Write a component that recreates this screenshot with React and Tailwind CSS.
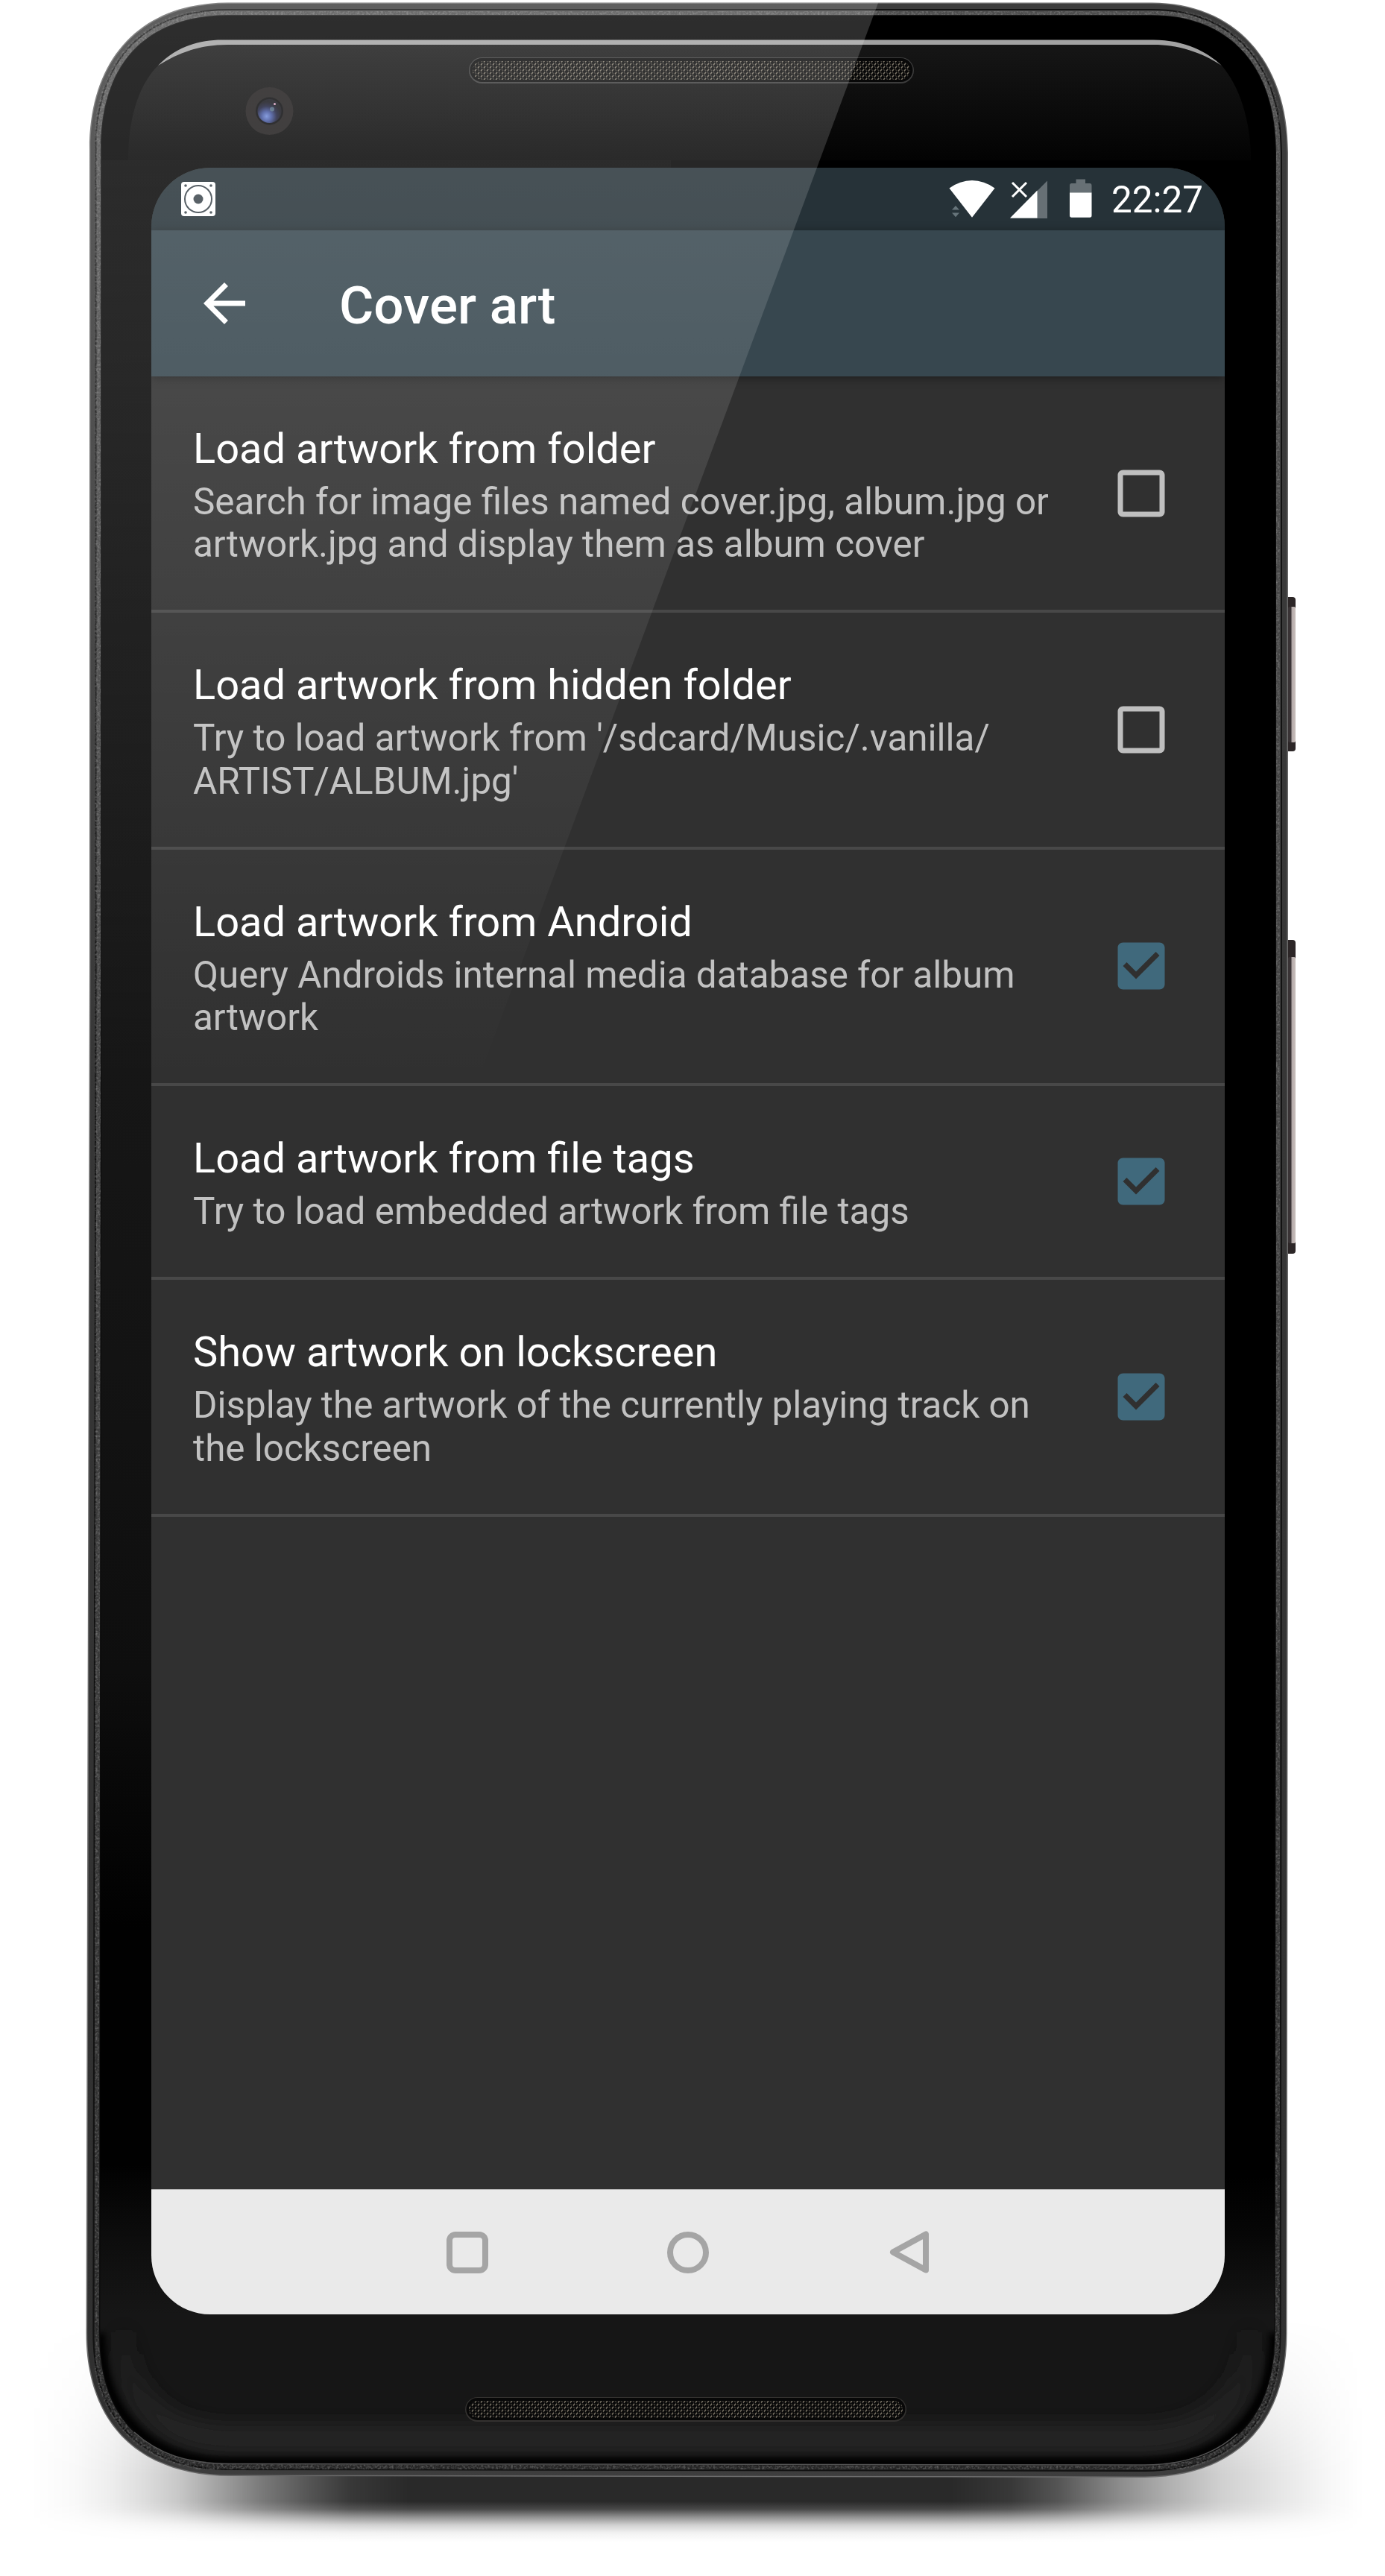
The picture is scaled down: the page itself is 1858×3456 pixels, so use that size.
import React from "react";

const ROWS = [
  {
    title: "Load artwork from folder",
    lines: ["Search for image files named cover.jpg, album.jpg or", "artwork.jpg and display them as album cover"],
    checked: false,
  },
  {
    title: "Load artwork from hidden folder",
    lines: ["Try to load artwork from '/sdcard/Music/.vanilla/", "ARTIST/ALBUM.jpg'"],
    checked: false,
  },
  {
    title: "Load artwork from Android",
    lines: ["Query Androids internal media database for album", "artwork"],
    checked: true,
  },
  {
    title: "Load artwork from file tags",
    lines: ["Try to load embedded artwork from file tags"],
    checked: true,
  },
  {
    title: "Show artwork on lockscreen",
    lines: ["Display the artwork of the currently playing track on", "the lockscreen"],
    checked: true,
  },
];

// Outline of the phone, moved inwards by i pixels.
function outline(i) {
  const t = 3.5 + i * 1.05;
  const b = 3323 - i;
  const r = 1728 - i;
  const l = 120 + i * 0.95;
  const lb = 115.5 + i * 1.1;
  const rb = 1726.5 - i;
  return `M${l} 200 C${l} ${77 + i * 0.45} ${190 + i * 0.4} ${t} 306 ${t} H1545 C${1655 - i * 0.4} ${t} ${r} ${80 + i * 0.45} ${r} 205 V1900 L${rb} 3130 C${rb} ${3250 - i * 0.45} ${1660 - i * 0.4} ${b} 1535 ${b + 1} L310 ${b - 1} C${185 + i * 0.4} ${b - 1} ${lb} ${3250 - i * 0.45} ${lb} 3130 L${l} 1300 Z`;
}

function Speaker({ x, y, w, h, ring }) {
  return (
    <g>
      <rect x={x} y={y} width={w} height={h} rx={h / 2} fill={ring} />
      <rect x={x + 1.5} y={y + 1} width={w - 3} height={h - 3} rx={h / 2 - 1.5} fill="#080808" />
      <rect x={x + 5} y={y + 5} width={w - 10} height={h - 10} rx={h / 2 - 5} fill="url(#mesh)" />
    </g>
  );
}

function Device() {
  return (
    <svg className="absolute inset-0" width="1858" height="3456" viewBox="0 0 1858 3456">
      <defs>
        <linearGradient id="shX" gradientUnits="userSpaceOnUse" x1="40" y1="0" x2="1830" y2="0">
          <stop offset="0" stopColor="#000" stopOpacity="0" />
          <stop offset="0.034" stopOpacity="0.025" />
          <stop offset="0.061" stopOpacity="0.07" />
          <stop offset="0.086" stopOpacity="0.135" />
          <stop offset="0.111" stopOpacity="0.215" />
          <stop offset="0.136" stopOpacity="0.34" />
          <stop offset="0.173" stopOpacity="0.52" />
          <stop offset="0.21" stopOpacity="0.67" />
          <stop offset="0.24" stopOpacity="0.78" />
          <stop offset="0.285" stopOpacity="0.84" />
          <stop offset="0.69" stopOpacity="0.84" />
          <stop offset="0.735" stopOpacity="0.78" />
          <stop offset="0.77" stopOpacity="0.67" />
          <stop offset="0.817" stopOpacity="0.45" />
          <stop offset="0.854" stopOpacity="0.31" />
          <stop offset="0.892" stopOpacity="0.185" />
          <stop offset="0.941" stopOpacity="0.09" />
          <stop offset="0.975" stopOpacity="0.03" />
          <stop offset="1" stopOpacity="0" />
        </linearGradient>
        <linearGradient id="shY" gradientUnits="userSpaceOnUse" x1="0" y1="3110" x2="0" y2="3410">
          <stop offset="0" stopColor="#000" />
          <stop offset="0.3" stopColor="#555" />
          <stop offset="0.7" stopColor="#fff" />
          <stop offset="0.82" stopColor="#fff" />
          <stop offset="0.855" stopColor="#d8d8d8" />
          <stop offset="0.887" stopColor="#8a8a8a" />
          <stop offset="0.925" stopColor="#383838" />
          <stop offset="0.96" stopColor="#101010" />
          <stop offset="1" stopColor="#000" />
        </linearGradient>
        <mask id="shMask"><rect x="0" y="3100" width="1858" height="320" fill="url(#shY)" /></mask>
        <linearGradient id="frame" x1="0" y1="0" x2="0" y2="1">
          <stop offset="0" stopColor="#3c3c3c" />
          <stop offset="0.97" stopColor="#303030" />
          <stop offset="1" stopColor="#3e3e3e" />
        </linearGradient>
        <linearGradient id="band" x1="0" y1="0" x2="0" y2="1">
          <stop offset="0" stopColor="#4c4c4c" />
          <stop offset="0.6" stopColor="#3c3c3c" />
          <stop offset="1" stopColor="#262626" />
        </linearGradient>
        <linearGradient id="bezelL" gradientUnits="userSpaceOnUse" x1="0" y1="225" x2="0" y2="3105">
          <stop offset="0" stopColor="#050505" />
          <stop offset="0.1" stopColor="#0b0b0b" />
          <stop offset="0.3" stopColor="#121212" />
          <stop offset="0.42" stopColor="#161616" />
          <stop offset="0.56" stopColor="#131313" />
          <stop offset="0.7" stopColor="#0e0e0e" />
          <stop offset="0.76" stopColor="#070707" />
          <stop offset="0.82" stopColor="#010101" />
          <stop offset="0.93" stopColor="#010101" />
          <stop offset="0.965" stopColor="#0d0d0d" />
          <stop offset="1" stopColor="#161616" />
        </linearGradient>
        <linearGradient id="bezelR" gradientUnits="userSpaceOnUse" x1="0" y1="2920" x2="0" y2="3110">
          <stop offset="0" stopColor="#000" />
          <stop offset="0.4" stopColor="#060606" />
          <stop offset="1" stopColor="#161616" />
        </linearGradient>
        <linearGradient id="glass" gradientUnits="userSpaceOnUse" x1="0" y1="60" x2="0" y2="215">
          <stop offset="0" stopColor="#161616" />
          <stop offset="1" stopColor="#030303" />
        </linearGradient>
        <linearGradient id="button" x1="0" y1="0" x2="1" y2="0">
          <stop offset="0" stopColor="#3a3436" />
          <stop offset="0.4" stopColor="#3a3436" />
          <stop offset="0.5" stopColor="#b3a9a8" />
          <stop offset="1" stopColor="#c9bfbc" />
        </linearGradient>
        <radialGradient id="lens" cx="0.38" cy="0.72" r="0.6">
          <stop offset="0" stopColor="#6f8ad8" />
          <stop offset="0.35" stopColor="#41539a" />
          <stop offset="0.7" stopColor="#1c1f3c" />
          <stop offset="1" stopColor="#14141b" />
        </radialGradient>
        <pattern id="mesh" width="8" height="8" patternUnits="userSpaceOnUse">
          <path d="M1 3.5 L3 0.8 M5 7.5 L7 4.8" stroke="#7d7668" strokeWidth="1.5" />
          <path d="M1 5 L3 7 M5 1 L7 3" stroke="#3d3a35" strokeWidth="1.4" />
        </pattern>
        <filter id="grain" x="0" y="0" width="1" height="1">
          <feTurbulence type="fractalNoise" baseFrequency="0.35" numOctaves="2" seed="4" />
          <feColorMatrix values="0 0 0 0 0.5  0 0 0 0 0.5  0 0 0 0 0.5  0.8 0 0 0 -0.32" />
          <feComposite in2="SourceGraphic" operator="in" />
        </filter>
        <filter id="soft" filterUnits="userSpaceOnUse" x="60" y="2980" width="1740" height="400"><feGaussianBlur stdDeviation="13" /></filter>
        <filter id="softer" filterUnits="userSpaceOnUse" x="60" y="2980" width="1740" height="400"><feGaussianBlur stdDeviation="4" /></filter>
        <clipPath id="bezelClip"><path d={outline(17)} /></clipPath>
        <linearGradient id="chinGlow" gradientUnits="userSpaceOnUse" x1="0" y1="3110" x2="0" y2="3270">
          <stop offset="0" stopColor="#262626" stopOpacity="0" />
          <stop offset="0.5" stopColor="#262626" stopOpacity="0.5" />
          <stop offset="1" stopColor="#272727" stopOpacity="1" />
        </linearGradient>
      </defs>

      <rect x="0" y="3100" width="1858" height="320" fill="url(#shX)" mask="url(#shMask)" />

      <rect x="1722" y="801" width="16" height="207" rx="4" fill="#2c2627" />
      <rect x="1728" y="814" width="10" height="182" rx="2" fill="url(#button)" />
      <rect x="1722" y="1261" width="16" height="421" rx="4" fill="#2c2627" />
      <rect x="1728" y="1284" width="10" height="384" rx="2" fill="url(#button)" />

      <path d={outline(0)} fill="#6c6c6c" />
      <path d={outline(1.5)} fill="url(#frame)" />
      <path d={outline(8)} fill="#121212" />
      <path d={outline(10)} fill="url(#band)" />
      <path d={outline(11)} fill="none" stroke="#777" strokeWidth="10" filter="url(#grain)" />
      <path d={outline(16)} fill="#0a0a0a" />
      <g clipPath="url(#bezelClip)">
        <rect x="100" y="0" width="1640" height="3340" fill="#000" />
        <rect x="100" y="215" width="800" height="2890" fill="url(#bezelL)" />
        <rect x="900" y="2920" width="840" height="190" fill="url(#bezelR)" />
        <rect x="100" y="3105" width="1640" height="230" fill="#161616" />
        <path d="M166 3060 V3140 C166 3210 215 3272 310 3272 H1530 C1625 3272 1676 3210 1676 3140 V3060" fill="none" stroke="url(#chinGlow)" strokeWidth="34" filter="url(#soft)" />
        <path d="M134 3130 C136 3240 200 3304 310 3304 H1530 C1645 3304 1708 3240 1710 3130" fill="none" stroke="#000" strokeWidth="14" filter="url(#softer)" />
        <path d="M172 215 C172 150 190 110 212 88 C240 70 270 60 305 60 H1547 C1580 60 1612 70 1639 88 C1662 115 1678 160 1678 215 Z" fill="url(#glass)" />
      </g>
      <path d="M180 3263 C212 3292 250 3305.5 310 3305.5 L1535 3307 C1590 3307 1630 3292 1660 3265" fill="none" stroke="#555" strokeWidth="1.5" />
      <path d="M212 88 C235 64 265 53.5 298 53.5 H1547 C1590 53.5 1620 70 1639 88 C1612 70 1580 60 1547 60 H305 C270 60 240 70 212 88 Z" fill="#a2a2a2" />

      <circle cx="361.5" cy="149" r="32" fill="#1d1a1a" />
      <circle cx="361.5" cy="149" r="18.5" fill="#08080a" />
      <circle cx="361.5" cy="149" r="16" fill="url(#lens)" />
      <circle cx="365" cy="146.5" r="3" fill="#57738a" opacity="0.8" />
      <circle cx="368.5" cy="139.5" r="1.5" fill="#d9a3c4" />

      <Speaker x={629} y={77} w={597} h={35} ring="#3c3c3c" />
      <Speaker x={624} y={3216} w={592} h={33} ring="#343230" />
    </svg>
  );
}

function Gloss() {
  return (
    <svg className="pointer-events-none absolute inset-0" width="1858" height="1500" viewBox="0 0 1858 1500">
      <defs>
        <linearGradient id="gloss" x1="0" y1="0" x2="0" y2="1">
          <stop offset="0" stopColor="#fff" stopOpacity="0.182" />
          <stop offset="1" stopColor="#fff" stopOpacity="0" />
        </linearGradient>
        <clipPath id="body"><path d={outline(0)} /></clipPath>
      </defs>
      <polygon points="100,0 1179.5,0 641,1450 100,1450" fill="url(#gloss)" clipPath="url(#body)" />
    </svg>
  );
}

function StatusBar() {
  return (
    <div className="flex h-[84px] shrink-0 items-center bg-[#263238] pl-[40px] pr-[29px]">
      <svg width="46" height="46" viewBox="0 0 46 46">
        <rect width="46" height="46" rx="4" fill="#fff" />
        <circle cx="23" cy="23" r="18" fill="none" stroke="#3c464d" strokeWidth="2" />
        <circle cx="23" cy="23" r="6.5" fill="#3c464d" />
        {[[6, 5], [40, 5], [6, 41], [40, 41]].map(([x, y]) => (
          <circle key={x + "-" + y} cx={x} cy={y} r="1.8" fill="#3c464d" />
        ))}
      </svg>
      <div className="ml-auto flex items-center">
        <svg width="62" height="54" viewBox="0 0 62 54">
          <path d="M31 51.7 L0.5 12.5 Q15 2 31 2 Q47 2 61.5 12.5 Z" fill="#fff" />
          <path d="M4 41.5 L9 36 L14 41.5 Z M4 45.5 H14 L9 51.3 Z" fill="#66747a" />
        </svg>
        <svg className="ml-[20px]" width="52" height="54" viewBox="0 0 52 54">
          <path d="M0 53 L50 2.4 V53 Z" fill="#677075" />
          <path d="M0 52.5 L36.5 15.6 V52.5 Z" fill="#fff" />
          <path d="M3 5 L22 24 M22 5 L3 24" stroke="#fff" strokeWidth="3" />
        </svg>
        <svg className="ml-[28px]" width="30" height="54" viewBox="0 0 30 54">
          <path d="M8.5 0.5 H21 V6 H27 Q29.5 6 29.5 9 V19 H0 V9 Q0 6 2.5 6 H8.5 Z" fill="#677075" />
          <path d="M0 18.5 H29.5 V49 Q29.5 51.7 27 51.7 H2.5 Q0 51.7 0 49 Z" fill="#fff" />
        </svg>
        <span className="ml-[26px] pt-[3px] text-[49.4px] leading-[81px] text-white">22:27</span>
      </div>
    </div>
  );
}

function Checkbox({ checked }) {
  return (
    <svg className="mr-[70px] shrink-0" width="84" height="84" viewBox="0 0 24 24" role="checkbox" aria-checked={checked}>
      {checked ? (
        <path
          fill="#40697c"
          d="M19 3H5c-1.11 0-2 .9-2 2v14c0 1.1.89 2 2 2h14c1.11 0 2-.9 2-2V5c0-1.1-.89-2-2-2zm-9 14l-5-5 1.41-1.41L10 14.17l7.59-7.59L19 8l-9 9z"
        />
      ) : (
        <path
          fill="#bfbfbf"
          d="M19 5v14H5V5h14m0-2H5c-1.1 0-2 .9-2 2v14c0 1.1.9 2 2 2h14c1.1 0 2-.9 2-2V5c0-1.1-.9-2-2-2z"
        />
      )}
    </svg>
  );
}

function Row({ title, lines, checked }) {
  const height = lines.length > 1 ? "h-[317.25px]" : "h-[260.5px]";
  return (
    <li className={`${height} flex items-center border-b-4 border-[#484848] pl-14`}>
      <div className="flex-1 self-start whitespace-nowrap pt-[64px]">
        <h2 className="text-[56px] leading-[66px] text-white">{title}</h2>
        <p className="mt-[10px] text-[49.4px] leading-[57.4px] text-[#c1c1c1]">
          {lines.map((line) => (
            <span key={line} className="block">{line}</span>
          ))}
        </p>
      </div>
      <Checkbox checked={checked} />
    </li>
  );
}

export default function App() {
  return (
    <div className="relative h-[3456px] w-[1858px] overflow-hidden bg-white pl-[203px] pt-[225px] font-['Roboto',sans-serif]">
      <Device />
      <div className="relative flex h-[2880px] w-[1440px] flex-col overflow-hidden rounded-[79px] bg-[#303030]">
        <StatusBar />
        <header className="relative flex h-[196px] shrink-0 items-center bg-[#37474f] pl-14 shadow-[0_2px_12px_rgba(0,0,0,0.4)]">
          <svg width="84" height="84" viewBox="0 0 24 24">
            <path fill="#fff" d="M20 11H7.83l5.59-5.59L12 4l-8 8 8 8 1.41-1.41L7.83 13H20v-2z" />
          </svg>
          <h1 className="ml-[112px] pt-[5px] text-[71px] font-medium leading-[82px] text-white">Cover art</h1>
        </header>
        <ul className="flex-1">
          {ROWS.map((row) => (
            <Row key={row.title} {...row} />
          ))}
        </ul>
        <nav className="flex h-[168px] shrink-0 items-center justify-center border-t border-[#bbbbbb] bg-[#eaeaea]">
          <div className="flex w-[296px] justify-center">
            <svg width="58" height="58" viewBox="0 0 58 58" fill="none" stroke="#a5a5a5" strokeWidth="8">
              <rect x="5" y="5" width="48" height="48" rx="8" />
            </svg>
          </div>
          <div className="flex w-[296px] justify-center">
            <svg width="58" height="58" viewBox="0 0 58 58" fill="none" stroke="#a5a5a5" strokeWidth="8">
              <circle cx="29" cy="29" r="24" />
            </svg>
          </div>
          <div className="flex w-[296px] justify-center">
            <svg width="58" height="58" viewBox="0 0 58 58" fill="none" stroke="#a5a5a5" strokeWidth="8" strokeLinejoin="round">
              <path d="M52 4.5 V52.5 L8 28.5 Z" />
            </svg>
          </div>
        </nav>
      </div>
      <Gloss />
    </div>
  );
}
